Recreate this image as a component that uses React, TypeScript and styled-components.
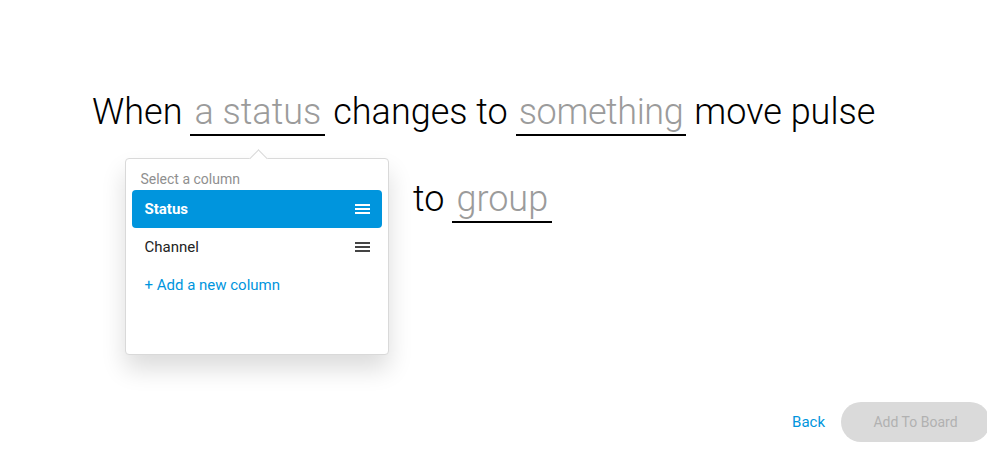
import React from "react";
import styled, { createGlobalStyle } from "styled-components";

const Global = createGlobalStyle`
  html, body { margin: 0; padding: 0; background: #fff; }
  body { font-family: Roboto, "Liberation Sans", sans-serif; overflow: hidden; }
`;

const Page = styled.div`
  position: relative;
  width: 987px;
  height: 450px;
  overflow: hidden;
  display: flex;
  flex-direction: column;
`;

const Sentence = styled.div`
  display: flex;
  flex-direction: column;
  gap: 42px;
  padding: 91px 0 0 92px;
`;

const Row = styled.div<{ $indent?: number }>`
  display: flex;
  align-items: flex-start;
  gap: 8px;
  padding-left: ${(p) => p.$indent ?? 0}px;
  font-size: 36px;
  font-weight: 300;
  line-height: 42px;
  color: #000;
  white-space: nowrap;
`;

const Words = styled.span``;

const Term = styled.span<{ $tight?: boolean }>`
  position: relative;
  display: inline-block;
  padding: ${(p) => (p.$tight ? "0 3px 1px" : "0 4px 1px")};
  letter-spacing: ${(p) => (p.$tight ? "-0.4px" : "0")};
  border-bottom: 2px solid #000;
  color: #9b9b9b;
`;

const Popover = styled.div`
  position: absolute;
  top: calc(100% + 24px);
  left: -65px;
  width: 250px;
  height: 195px;
  background: #fff;
  border: 1px solid #d9d9d9;
  border-radius: 4px;
  box-shadow: 0 14px 24px rgba(0, 0, 0, 0.14);
  display: flex;
  flex-direction: column;
  padding: 0 6px;
  box-sizing: content-box;
  font-weight: 400;
  letter-spacing: 0;
  line-height: normal;
  &::before {
    content: "";
    position: absolute;
    top: -7px;
    left: 126px;
    width: 12px;
    height: 12px;
    background: #fff;
    border-left: 1px solid #d9d9d9;
    border-top: 1px solid #d9d9d9;
    transform: rotate(45deg);
  }
`;

const PopHeader = styled.div`
  padding: 12px 8px 3px 8px;
  font-size: 14px;
  line-height: 16px;
  color: #8f8f8f;
`;

const Option = styled.div<{ $active?: boolean; $link?: boolean }>`
  height: 38px;
  display: flex;
  align-items: center;
  justify-content: space-between;
  padding: 0 12px;
  border-radius: 4px;
  font-size: 15px;
  font-weight: ${(p) => (p.$active ? 700 : 400)};
  background: ${(p) => (p.$active ? "#0095dd" : "transparent")};
  color: ${(p) => (p.$active ? "#fff" : p.$link ? "#0095dd" : "#222")};
`;

const Handle = ({ color }: { color: string }) => (
  <svg width="15" height="12" viewBox="0 0 15 12">
    <rect x="0" y="1" width="15" height="2" fill={color} />
    <rect x="0" y="5" width="15" height="2" fill={color} />
    <rect x="0" y="9" width="15" height="2" fill={color} />
  </svg>
);

const Footer = styled.div`
  margin-top: auto;
  display: flex;
  justify-content: flex-end;
  align-items: center;
  gap: 16px;
  margin-right: -3px;
  margin-bottom: 8px;
`;

const BackLink = styled.a`
  font-size: 15px;
  color: #0095dd;
  cursor: pointer;
`;

const AddButton = styled.button`
  width: 149px;
  height: 40px;
  border: none;
  border-radius: 20px;
  background: #dadada;
  color: #b1b1b1;
  font-family: Roboto, "Liberation Sans", sans-serif;
  font-size: 14px;
`;

export default function App() {
  return (
    <>
      <Global />
      <Page>
        <Sentence>
          <Row>
            <Words>When</Words>
            <Term>
              a status
              <Popover>
                <PopHeader>Select a column</PopHeader>
                <Option $active>
                  Status
                  <Handle color="#fff" />
                </Option>
                <Option>
                  Channel
                  <Handle color="#444" />
                </Option>
                <Option $link>+ Add a new column</Option>
              </Popover>
            </Term>
            <Words>changes to</Words>
            <Term $tight>something</Term>
            <Words>move pulse</Words>
          </Row>
          <Row $indent={321}>
            <Words>to</Words>
            <Term>group</Term>
          </Row>
        </Sentence>
        <Footer>
          <BackLink>Back</BackLink>
          <AddButton>Add To Board</AddButton>
        </Footer>
      </Page>
    </>
  );
}
